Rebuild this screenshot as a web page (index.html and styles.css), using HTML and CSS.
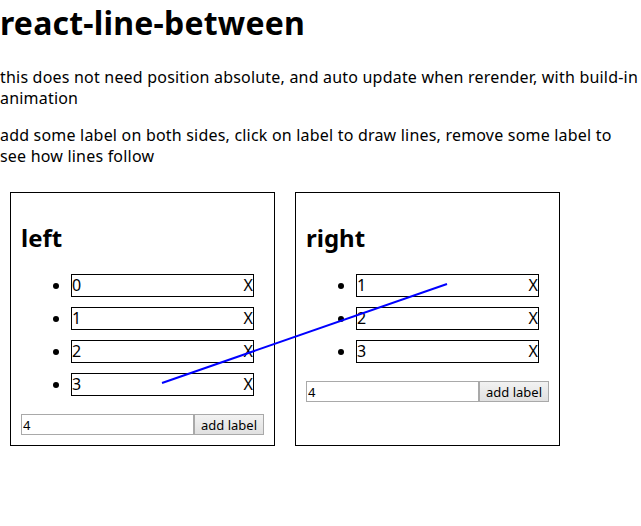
FILE: index.html
```html
<!DOCTYPE html>
<html>
<head>
<meta charset="utf-8">
<link rel="stylesheet" href="styles.css">
</head>
<body>
<h1 class="title">react-line-between</h1>
<p class="text">this does not need position absolute, and auto update when rerender, with build-in animation</p>
<p class="text last">add some label on both sides, click on label to draw lines, remove some label to see how lines follow</p>
<div class="panels">
  <div class="panel">
    <h2 class="panel-title">left</h2>
    <ul class="labels">
      <li class="item"><div class="label"><span>0</span><span>X</span></div></li>
      <li class="item"><div class="label"><span>1</span><span>X</span></div></li>
      <li class="item"><div class="label"><span>2</span><span>X</span></div></li>
      <li class="item"><div class="label"><span>3</span><span>X</span></div></li>
    </ul>
    <div class="add"><input class="add-input" type="text" value="4"><button class="add-btn">add label</button></div>
  </div>
  <div class="panel">
    <h2 class="panel-title">right</h2>
    <ul class="labels">
      <li class="item"><div class="label"><span>1</span><span>X</span></div></li>
      <li class="item"><div class="label"><span>2</span><span>X</span></div></li>
      <li class="item"><div class="label"><span>3</span><span>X</span></div></li>
    </ul>
    <div class="add"><input class="add-input" type="text" value="4"><button class="add-btn">add label</button></div>
  </div>
</div>
<svg class="link" width="641" height="526" viewBox="0 0 641 526"><line x1="162" y1="383" x2="447" y2="284" stroke="#0000ff" stroke-width="2"/></svg>
</body>
</html>
```

FILE: styles.css
```css
body {
  margin: 0;
  font-family: "Noto Sans", "Open Sans", sans-serif;
  font-size: 16px;
  color: #000;
  background: #fff;
  position: relative;
}
.title {
  margin: 0 0 21px 0;
  font-size: 32px;
  line-height: 46px;
  font-weight: bold;
  letter-spacing: 0.2px;
}
.text {
  margin: 16px 0;
  line-height: 21px;
  letter-spacing: 0.2px;
}
.text.last {
  margin-bottom: 15px;
}
.panels {
  display: flex;
  align-items: stretch;
}
.panel {
  margin: 10px;
  border: 1px solid #000;
  padding: 10px;
  width: 243px;
}
.panel-title {
  margin: 19px 0 20px 0;
  font-size: 24px;
  line-height: 32px;
  font-weight: bold;
}
.labels {
  margin: 16px 0 0 0;
  padding-left: 50px;
}
.item {
  margin-bottom: 10px;
}
.item:last-child {
  margin-bottom: 0;
}
.label {
  width: 181px;
  border: 1px solid #000;
  line-height: 21px;
  display: flex;
  justify-content: space-between;
}
.add {
  display: flex;
  margin-top: 18px;
}
.add-input {
  width: 173px;
  height: 21px;
  box-sizing: border-box;
  border: 1px solid #a9a9a9;
  padding: 1px 1px;
  margin: 0;
  font-family: "Noto Sans", sans-serif;
  font-size: 13px;
}
.add-btn {
  width: 70px;
  height: 21px;
  box-sizing: border-box;
  border: 1px solid #a9a9a9;
  background: linear-gradient(#f2f2f2, #e0e0e0);
  margin: 0;
  padding: 0;
  font-family: "Noto Sans", sans-serif;
  font-size: 13px;
  color: #000;
}
.link {
  position: absolute;
  left: 0;
  top: 0;
  pointer-events: none;
}
```
